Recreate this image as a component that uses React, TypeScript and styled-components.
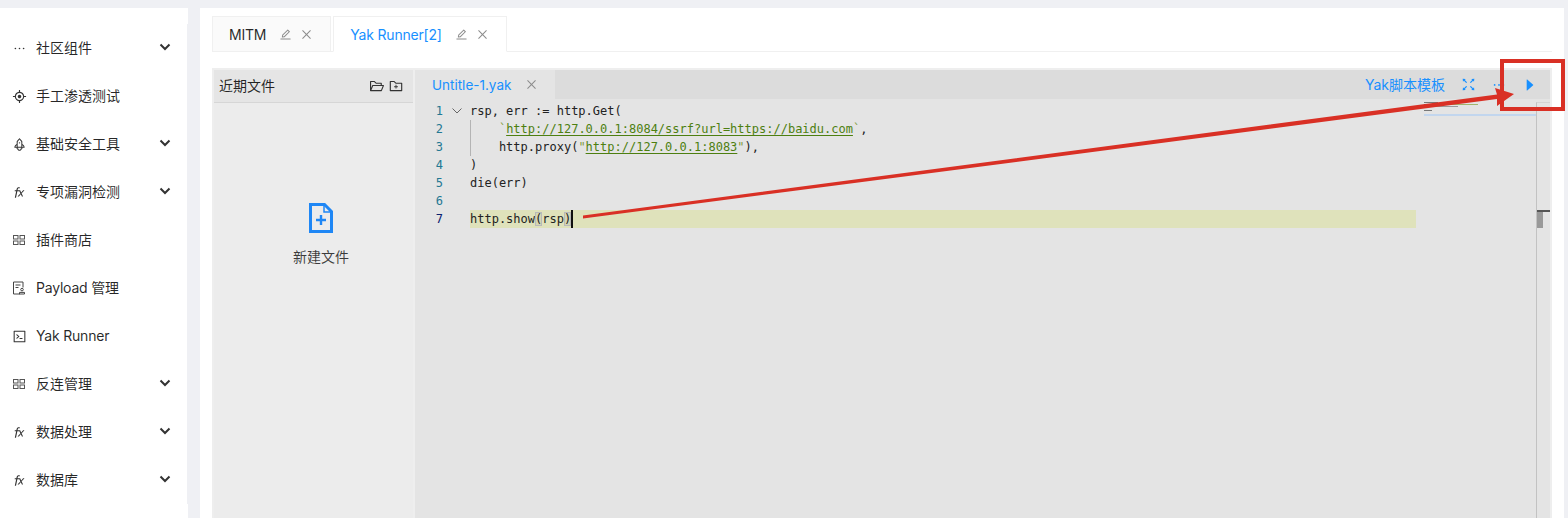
import React from "react";
import styled, { createGlobalStyle } from "styled-components";
import {
  AiOutlineAim,
  AiOutlineCaretRight,
  AiOutlineClose,
  AiOutlineCode,
  AiOutlineEdit,
  AiOutlineEllipsis,
  AiOutlineFolderAdd,
  AiOutlineFolderOpen,
  AiOutlineFullscreen,
  AiOutlineFunction,
  AiOutlineRocket,
} from "react-icons/ai";

const GlobalStyle = createGlobalStyle`
  html, body {
    margin: 0;
    height: 100%;
    overflow: hidden;
    background: #eff0f4;
  }
  #root { height: 100%; }
`;

const Page = styled.div`
  position: relative;
  display: flex;
  gap: 12px;
  width: 1568px;
  height: 518px;
  padding-top: 8px;
  box-sizing: border-box;
  overflow: hidden;
  font-family: Inter, "Noto Sans CJK SC", sans-serif;
  font-size: 14px;
  color: rgba(0, 0, 0, 0.85);
`;

// Left navigation
const Sidebar = styled.aside`
  width: 188px;
  flex: none;
  background: #fff;
  padding-top: 16px;
  box-sizing: border-box;
`;

const Menu = styled.nav`
  border-right: 1px solid #eff0f4;
`;

const MenuItem = styled.div`
  display: flex;
  align-items: center;
  height: 48px;
  padding-left: 12px;
`;

const MenuIcon = styled.span`
  width: 24px;
  flex: none;
  display: flex;
  align-items: center;
  color: #333;
  font-size: 15px;
`;

const MenuLabel = styled.span<{ $latin?: boolean }>`
  flex: 1;
  margin-top: -2px;
  letter-spacing: ${(p) => (p.$latin ? "-0.2px" : "0")};
`;

const Chevron = styled.svg`
  width: 12px;
  height: 8px;
  margin-right: 16px;
  margin-top: -2px;
  fill: none;
  stroke: #333;
  stroke-width: 2;
`;

// Main area
const Main = styled.main`
  width: 1364px;
  flex: none;
  background: #fff;
  padding: 8px 12px 0;
  box-sizing: border-box;
`;

const TabBar = styled.div`
  display: flex;
  gap: 2px;
  height: 36px;
  box-sizing: border-box;
  border-bottom: 1px solid #f0f0f0;
  margin-bottom: 16px;
`;

const Tab = styled.div<{ $active?: boolean }>`
  display: flex;
  align-items: center;
  height: 36px;
  box-sizing: border-box;
  padding: 0 17px 0 16px;
  border: 1px solid #f0f0f0;
  border-bottom-color: ${(p) => (p.$active ? "#fff" : "#f0f0f0")};
  background: ${(p) => (p.$active ? "#fff" : "#fafafa")};
  color: ${(p) => (p.$active ? "#1890ff" : "rgba(0, 0, 0, 0.85)")};
  letter-spacing: -0.2px;
`;

const TabActions = styled.span`
  display: flex;
  align-items: center;
  gap: 8px;
  margin-left: 13px;
  color: #8c8c8c;
  font-size: 13px;
`;

const Frame = styled.div`
  display: flex;
  gap: 2px;
  height: 460px;
  padding: 2px;
  box-sizing: border-box;
  background: #eee;
`;

const FilePanel = styled.section`
  width: 199px;
  flex: none;
  background: #ececec;
`;

const FileHeader = styled.header`
  display: flex;
  align-items: center;
  justify-content: space-between;
  height: 33px;
  box-sizing: border-box;
  padding: 0 9px 2px 5px;
  background: #e5e5e5;
  border-bottom: 1px solid #d6d6d6;
`;

const FileActions = styled.span`
  display: flex;
  gap: 3px;
  margin-top: 2px;
  font-size: 16px;
  color: #333;
`;

const NewFile = styled.div`
  display: flex;
  flex-direction: column;
  align-items: center;
  gap: 13px;
  padding: 100px 0 0 15px;
  color: rgba(0, 0, 0, 0.75);
`;

const EditorPanel = styled.section`
  flex: 1;
  min-width: 0;
  background: #e4e4e4;
`;

const EditorBar = styled.header`
  display: flex;
  align-items: center;
  height: 29px;
  background: #dcdcdc;
`;

const EditorTab = styled.div`
  display: flex;
  align-items: center;
  width: 140px;
  height: 100%;
  box-sizing: border-box;
  padding-left: 17px;
  background: #e4e4e4;
  color: #1890ff;
  font-size: 13.5px;
`;

const EditorClose = styled.span`
  display: flex;
  margin-left: 14px;
  color: #8c8c8c;
  font-size: 13px;
`;

const EditorTools = styled.div`
  display: flex;
  align-items: center;
  margin-left: auto;
  padding-right: 12px;
  color: #1890ff;
`;

const TemplateLink = styled.span`
  margin-top: -2px;
`;

const ToolIcon = styled.span<{ $left: number; $size: number }>`
  display: flex;
  margin-left: ${(p) => p.$left}px;
  font-size: ${(p) => p.$size}px;
`;

const EditorBody = styled.div`
  display: flex;
  height: 420px;
  padding-top: 3px;
`;

const Code = styled.div`
  width: 1001px;
  flex: none;
  font-family: "DejaVu Sans Mono", "Liberation Mono", monospace;
  font-size: 12px;
  color: #222;
`;

const Row = styled.div`
  display: flex;
  height: 18px;
  line-height: 18px;
`;

const LineNo = styled.span<{ $current?: boolean }>`
  width: 28px;
  flex: none;
  text-align: right;
  color: ${(p) => (p.$current ? "#0b216f" : "#237893")};
`;

const Fold = styled.span`
  width: 27px;
  flex: none;
  display: flex;
  align-items: center;
  justify-content: center;
`;

const FoldIcon = styled.svg`
  width: 10px;
  height: 6px;
  fill: none;
  stroke: #666;
  stroke-width: 1;
`;

const Line = styled.span<{ $current?: boolean; $guide?: boolean }>`
  flex: 1;
  white-space: pre;
  background: ${(p) => (p.$current ? "#dfe2bb" : "transparent")};
  box-shadow: ${(p) => (p.$guide ? "inset 1px 0 0 #b4b4b4" : "none")};
`;

const Tick = styled.span`
  color: #7f9a3c;
`;

const Url = styled.span`
  color: #4d7f10;
  text-decoration: underline;
  text-underline-offset: 2px;
`;

const Bracket = styled.span`
  box-shadow: inset 0 0 0 1px #b9b9b9;
  background: #d3d6b4;
`;

const Caret = styled.span`
  display: inline-block;
  width: 2px;
  height: 18px;
  margin-right: -2px;
  vertical-align: top;
  background: #111;
`;

const Minimap = styled.svg`
  width: 120px;
  height: 20px;
  flex: none;
`;

const Overview = styled.div`
  flex: 1;
  border-left: 1px solid #c2c2c2;
  border-top: 1px solid #d4d4d4;
  height: 417px;
`;

const OverviewCursor = styled.div`
  height: 2px;
  margin-top: 107px;
  background: #555;
`;

const OverviewSlider = styled.div`
  width: 6px;
  height: 16px;
  background: #999;
`;

const Annotation = styled.svg`
  position: absolute;
  top: 0;
  left: 0;
  width: 1568px;
  height: 518px;
  pointer-events: none;
`;

const GridIcon = () => (
  <svg width="14" height="12" viewBox="0 0 14 12" fill="none" stroke="#555" strokeWidth="1">
    <rect x="1.500" y="1.500" width="4.500" height="3.500" />
    <rect x="8" y="1.500" width="4.500" height="3.500" />
    <rect x="1.500" y="7" width="4.500" height="3.500" />
    <rect x="8" y="7" width="4.500" height="3.500" />
  </svg>
);

const PayloadIcon = () => (
  <svg width="14" height="14" viewBox="0 0 14 14" fill="none" stroke="#444" strokeWidth="1">
    <path d="M8 13H1.500V1h9.500v5.500" />
    <path d="M3.500 4h5M3.500 6.500h3" />
    <circle cx="10" cy="8.600" r="1.300" />
    <path d="M7.500 13v-1.600h5V13z" />
  </svg>
);

const menuItems: { icon: React.ReactNode; label: string; sub?: boolean; latin?: boolean }[] = [
  { icon: <AiOutlineEllipsis />, label: "社区组件", sub: true },
  { icon: <AiOutlineAim />, label: "手工渗透测试" },
  { icon: <AiOutlineRocket />, label: "基础安全工具", sub: true },
  { icon: <AiOutlineFunction />, label: "专项漏洞检测", sub: true },
  { icon: <GridIcon />, label: "插件商店" },
  { icon: <PayloadIcon />, label: "Payload 管理", latin: true },
  { icon: <AiOutlineCode />, label: "Yak Runner", latin: true },
  { icon: <GridIcon />, label: "反连管理", sub: true },
  { icon: <AiOutlineFunction />, label: "数据处理", sub: true },
  { icon: <AiOutlineFunction />, label: "数据库", sub: true },
];

const tabs = [
  { label: "MITM", active: false },
  { label: "Yak Runner[2]", active: true },
];

export default function App() {
  return (
    <Page>
      <GlobalStyle />
      <Sidebar>
        <Menu>
          {menuItems.map((item) => (
            <MenuItem key={item.label}>
              <MenuIcon>{item.icon}</MenuIcon>
              <MenuLabel $latin={item.latin}>{item.label}</MenuLabel>
              {item.sub && (
                <Chevron viewBox="0 0 12 8">
                  <path d="M1.500 1.500 6 6l4.500-4.500" />
                </Chevron>
              )}
            </MenuItem>
          ))}
        </Menu>
      </Sidebar>

      <Main>
        <TabBar>
          {tabs.map((tab) => (
            <Tab key={tab.label} $active={tab.active}>
              {tab.label}
              <TabActions>
                <AiOutlineEdit />
                <AiOutlineClose />
              </TabActions>
            </Tab>
          ))}
        </TabBar>

        <Frame>
          <FilePanel>
            <FileHeader>
              近期文件
              <FileActions>
                <AiOutlineFolderOpen />
                <AiOutlineFolderAdd />
              </FileActions>
            </FileHeader>
            <NewFile>
              <svg width="24" height="30" viewBox="0 0 24 30" fill="none" stroke="#1f87f5">
                <path d="M1.500 1.500h14l7 7v20h-21z" strokeWidth="3" />
                <path d="M15 2v7h7" strokeWidth="1.500" />
                <path d="M12 12v10M7 17h10" strokeWidth="2.400" />
              </svg>
              新建文件
            </NewFile>
          </FilePanel>

          <EditorPanel>
            <EditorBar>
              <EditorTab>
                Untitle-1.yak
                <EditorClose>
                  <AiOutlineClose />
                </EditorClose>
              </EditorTab>
              <EditorTools>
                <TemplateLink>Yak脚本模板</TemplateLink>
                <ToolIcon $left={15} $size={17}>
                  <AiOutlineFullscreen />
                </ToolIcon>
                <ToolIcon $left={14} $size={16}>
                  <AiOutlineEllipsis />
                </ToolIcon>
                <ToolIcon $left={15} $size={16}>
                  <AiOutlineCaretRight />
                </ToolIcon>
              </EditorTools>
            </EditorBar>

            <EditorBody>
              <Code>
                <Row>
                  <LineNo>1</LineNo>
                  <Fold>
                    <FoldIcon viewBox="0 0 10 6">
                      <path d="M.5.5 5 5 9.500.5" />
                    </FoldIcon>
                  </Fold>
                  <Line>rsp, err := http.Get(</Line>
                </Row>
                <Row>
                  <LineNo>2</LineNo>
                  <Fold />
                  <Line $guide>
                    {"    "}
                    <Tick>`</Tick>
                    <Url>http://127.0.0.1:8084/ssrf?url=https://baidu.com</Url>
                    <Tick>`</Tick>,
                  </Line>
                </Row>
                <Row>
                  <LineNo>3</LineNo>
                  <Fold />
                  <Line $guide>
                    {"    http.proxy("}
                    <Tick>"</Tick>
                    <Url>http://127.0.0.1:8083</Url>
                    <Tick>"</Tick>),
                  </Line>
                </Row>
                <Row>
                  <LineNo>4</LineNo>
                  <Fold />
                  <Line>)</Line>
                </Row>
                <Row>
                  <LineNo>5</LineNo>
                  <Fold />
                  <Line>die(err)</Line>
                </Row>
                <Row>
                  <LineNo>6</LineNo>
                  <Fold />
                  <Line />
                </Row>
                <Row>
                  <LineNo $current>7</LineNo>
                  <Fold />
                  <Line $current>
                    http.show<Bracket>(</Bracket>rsp<Bracket>)</Bracket>
                    <Caret />
                  </Line>
                </Row>
              </Code>

              <Minimap viewBox="0 0 120 20">
                <rect x="8" y="0" width="14" height="1" fill="#777" />
                <rect x="8" y="2" width="8" height="1" fill="#777" />
                <rect x="16" y="2" width="46" height="1" fill="#a3b56b" />
                <rect x="8" y="4" width="34" height="1" fill="#999" />
                <rect x="8" y="8" width="8" height="1" fill="#777" />
                <rect x="8" y="12" width="112" height="2" fill="#c2d6ee" />
              </Minimap>

              <Overview>
                <OverviewCursor />
                <OverviewSlider />
              </Overview>
            </EditorBody>
          </EditorPanel>
        </Frame>
      </Main>

      <Annotation viewBox="0 0 1568 518">
        <rect x="1502" y="61" width="61" height="48" fill="none" stroke="#d93025" strokeWidth="4" />
        <polygon
          points="583,215.500 1497,94.500 1495,88 1514,94 1497,106 1497,99 583,218.500"
          fill="#d93025"
        />
      </Annotation>
    </Page>
  );
}
